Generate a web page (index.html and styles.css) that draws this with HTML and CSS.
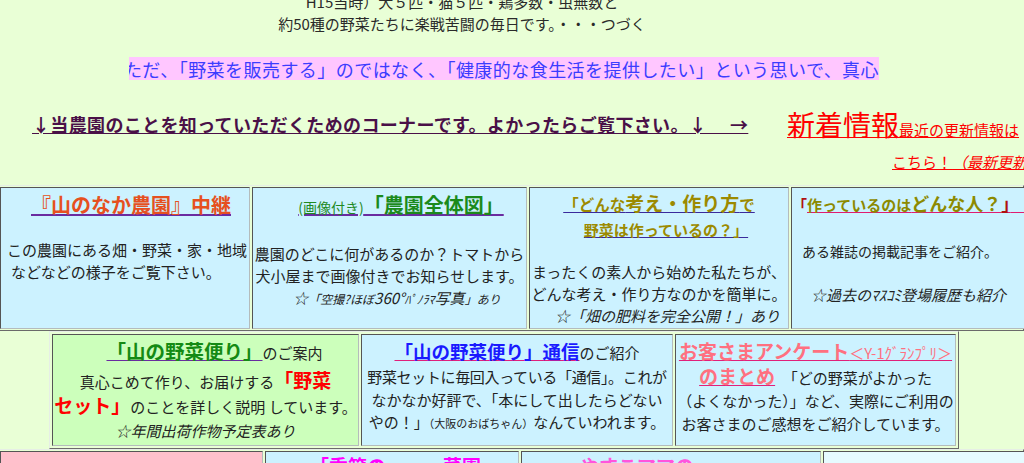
FILE: index.html
```html
<!DOCTYPE html>
<html lang="ja">
<head>
<meta charset="utf-8">
<title>山のなか農園</title>
<link rel="stylesheet" href="styles.css">
</head>
<body>
<div class="intro">
  <p>H15当時）犬５匹・猫５匹・鶏多数・虫無数と</p>
  <p>約50種の野菜たちに楽戦苦闘の毎日です。・・・つづく</p>
</div>

<div class="marquee"><span class="marquee-text">ただ、「野菜を販売する」のではなく、「健康的な食生活を提供したい」という思いで、真心</span></div>

<div class="news-row">
  <a class="corner-link" href="#">↓当農園のことを知っていただくためのコーナーです。よかったらご覧下さい。↓　&nbsp;→</a>
  <div class="news">
    <div class="news-line1"><a class="news-link" href="#"><span class="news-big">新着情報</span><span class="news-small">最近の更新情報は</span></a></div>
    <div class="news-line2"><a class="news-link" href="#">こちら！<i>（最新更新日：2004年5月）</i></a></div>
  </div>
</div>

<div class="tbl grid1">
  <div class="cell c-relay">
    <p class="title t-relay"><a class="u-purple t-orange" href="#">『山のなか農園』中継</a></p>
    <div class="body b-relay">
      <p>この農園にある畑・野菜・家・地域</p>
      <p class="indent4">などなどの様子をご覧下さい。</p>
    </div>
  </div>
  <div class="cell c-map">
    <p class="title t-map"><a class="u-purple t-green" href="#"><span class="small-green">(画像付き)</span>「農園全体図」</a></p>
    <div class="body b-map">
      <p>農園のどこに何があるのか？トマトから</p>
      <p>犬小屋まで画像付きでお知らせします。</p>
      <p class="note note-map">☆<span class="s12">「空撮?ほぼ</span>360°<span class="s12">ﾊﾟﾉﾗﾏ</span>写真<span class="s12">」あり</span></p>
    </div>
  </div>
  <div class="cell c-policy">
    <div class="title-2l">
      <p><a class="u-navy t-olive" href="#"><span class="s15">「どんな</span><span class="s19">考え・作り方</span><span class="s15">で</span></a></p>
      <p class="line2-shift"><a class="u-navy t-olive" href="#">野菜は作っているの？」</a></p>
    </div>
    <div class="body b-policy">
      <p>まったくの素人から始めた私たちが、</p>
      <p>どんな考え・作り方なのかを簡単に。</p>
      <p class="note note-right">☆「畑の肥料を完全公開！」あり</p>
    </div>
  </div>
  <div class="cell c-people">
    <p class="title t-people"><span class="t-brown">「</span><a class="u-crimson t-olive2" href="#">作っているのは<span class="s18">どんな人？<span class="t-brown">」</span></span>　</a></p>
    <p class="people-1">ある雑誌の掲載記事をご紹介。</p>
    <p class="people-2 note">☆過去のﾏｽｺﾐ登場履歴も紹介</p>
  </div>
</div>

<div class="tbl grid2">
  <div class="cell c-set green-bg">
    <p class="title2 title-set"><a class="u-purple t-green2 big195" href="#">「山の野菜便り」</a>のご案内</p>
    <div class="set-body">
      <p>真心こめて作り、お届けする<span class="red-big">「野菜</span></p>
      <p><span class="red-big">セット」</span>のことを詳しく説明 しています。</p>
    </div>
    <p class="note set-note">☆年間出荷作物予定表あり</p>
  </div>
  <div class="cell c-letter">
    <p class="title2"><a class="u-magenta t-blue big185" href="#">「山の野菜便り」通信</a>のご紹介</p>
    <div class="letter-body">
      <p class="tight">野菜セットに毎回入っている「通信」。これが</p>
      <p>なかなか好評で、「本にして出したらどない</p>
      <p>やの！」<span class="s11">（大阪のおばちゃん）</span>なんていわれます。</p>
    </div>
  </div>
  <div class="cell c-survey">
    <p class="title2"><a class="u-magenta t-salmon" href="#"><span class="big19">お客さまアンケート</span>＜Y-1ｸﾞﾗﾝﾌﾟﾘ＞</a></p>
    <div class="survey-body">
      <p><a class="u-magenta t-salmon big19" href="#">のまとめ</a>　「どの野菜がよかった</p>
      <p>（よくなかった）」など、実際にご利用の</p>
      <p>お客さまのご感想をご紹介しています。</p>
    </div>
  </div>
</div>

<div class="tbl grid3">
  <div class="cell c-r3a pink-bg"></div>
  <div class="cell c-r3b"><p class="r3-title t-magenta pad-b">「季節の　　　菜園」</p></div>
  <div class="cell c-r3c"><p class="r3-title t-pink pad-c">やすこママの</p></div>
  <div class="cell c-r3d pale-bg"></div>
</div>
</body>
</html>
```

FILE: styles.css
```css
* { box-sizing: border-box; }
html, body { margin: 0; padding: 0; }
body {
  width: 1024px;
  height: 463px;
  overflow: hidden;
  background: #e9ffd6;
  font-family: "Noto Sans CJK JP", "Noto Sans", sans-serif;
  font-size: 15px;
  color: #222;
}
p { margin: 0; }
a { color: inherit; text-decoration: underline; }

/* intro */
.intro {
  margin-top: -9px;
  padding-right: 100px;
  text-align: center;
  line-height: 22px;
  color: #2a2a2a;
}

/* marquee: the scrolling line is clipped at both ends */
.marquee {
  display: flex;
  justify-content: flex-end;
  margin: 22px 0 0 129px;
  width: 750px;
  height: 23px;
  line-height: 25px;
  background: #ffc6ff;
  overflow: hidden;
  white-space: nowrap;
  font-size: 18px;
  letter-spacing: 0.45px;
  color: #3c3cff;
}
.marquee-text { flex: 0 0 auto; }

/* news row */
.news-row {
  display: flex;
  align-items: flex-start;
  height: 105px;
  white-space: nowrap;
}
.corner-link {
  flex: 0 0 787px;
  padding-left: 32px;
  margin-top: 32px;
  font-size: 18px;
  font-weight: bold;
  line-height: 24px;
  letter-spacing: 0.35px;
  color: #4a1048;
}
.news { margin-top: 27px; color: #ff0000; }
.news-link { color: #ff0000; }
.news-line1 { line-height: 34px; }
.news-big { font-size: 28px; }
.news-small { font-size: 15px; }
.news-line2 { padding-left: 105px; margin-top: 4px; line-height: 22px; font-size: 15px; }

/* tables */
.tbl {
  display: flex;
  gap: 2px;
  padding: 1px;
  border: 1px solid;
  border-color: #e6eee6 #6a6a6a #6a6a6a #e6eee6;
}
.cell {
  flex: 0 0 auto;
  border: 1px solid;
  border-color: #555 #b4bcbc #b4bcbc #555;
  background: #ccf2ff;
  white-space: nowrap;
  overflow: hidden;
}
.grid1 { margin-left: -2px; }
.grid1 .cell { height: 142px; }
.c-relay { width: 250px; }
.c-map { width: 275px; }
.c-policy { width: 260px; }
.c-people { width: 300px; }

.title { margin-top: 4px; line-height: 26px; font-size: 20px; font-weight: bold; }
.t-relay { text-align: center; padding-left: 12px; }
.t-map { text-align: center; padding-left: 23px; }
.t-orange { color: #e65020; }
.t-green { color: #1b8a1b; }
.small-green { font-size: 14px; font-weight: normal; color: #1f8a1f; }
.u-purple { text-decoration-color: #6a2ca0; }
.u-navy { text-decoration-color: #3a2a9c; }
.u-crimson { text-decoration-color: #e01c70; }
.u-magenta { text-decoration-color: #e0207a; }

.body { line-height: 22px; }
.b-relay { margin-top: 21px; padding-left: 6px; }
.indent4 { padding-left: 4px; }
.b-map { margin-top: 23px; text-align: center; }
.note { font-style: italic; }
.note-map { padding-left: 15px; }
.s12 { font-size: 12px; }

.title-2l { margin-top: 2px; text-align: center; line-height: 25px; font-weight: bold; }
.t-olive { color: #9c8a00; }
.s15 { font-size: 15.5px; }
.s19 { font-size: 19px; }
.line2-shift { padding-left: 14px; }
.b-policy { margin-top: 19px; text-align: center; }
.note-right { text-align: right; padding-right: 8px; }

.t-people { margin-top: 2px; font-size: 15px; }
.t-olive2 { color: #8c8a00; }
.t-brown { color: #b01010; }
.s18 { font-size: 18px; }
.people-1 { margin-top: 22px; line-height: 22px; font-size: 14px; padding-left: 10px; }
.people-2 { margin-top: 22px; line-height: 22px; padding-left: 19px; }

/* row 2 */
.grid2 { margin-left: 49px; width: 910px; padding: 2px; }
.grid2 .cell { height: 112px; text-align: center; }
.c-set { width: 307px; }
.c-letter { width: 312px; }
.c-survey { width: 281px; }
.green-bg { background: #ccffbb; }
.title2 { margin-top: 5px; line-height: 26px; }
.title-set { padding-left: 18px; }
.big195 { font-size: 19.5px; font-weight: bold; line-height: 19px; }
.big185 { font-size: 18.5px; font-weight: bold; line-height: 19px; }
.big19 { font-size: 19px; font-weight: bold; line-height: 19px; }
.t-green2 { color: #148a14; }
.t-blue { color: #1a1aff; }
.t-salmon { color: #ff7080; }
.set-body { margin-top: 3px; line-height: 25px; }
.red-big { font-size: 19px; font-weight: bold; line-height: 19px; color: #ff0000; }
.set-note { margin-top: 1px; line-height: 22px; }
.letter-body { line-height: 22.5px; }
.tight { letter-spacing: -0.35px; }
.s11 { font-size: 11px; line-height: 11px; }
.survey-body { line-height: 23px; }

/* row 3 */
.grid3 { margin-left: -2px; }
.grid3 .cell { height: 60px; }
.c-r3a { width: 263px; }
.c-r3b { width: 254px; }
.c-r3c { width: 300px; }
.c-r3d { width: 300px; }
.pink-bg { background: #ffc0cc; }
.pale-bg { background: #e6fbff; }
.r3-title { line-height: 28px; font-size: 19px; font-weight: bold; }
.t-magenta { color: #ff00ff; }
.t-pink { color: #ff55dd; }
.pad-b { padding-left: 44px; }
.pad-c { padding-left: 58px; }
```
